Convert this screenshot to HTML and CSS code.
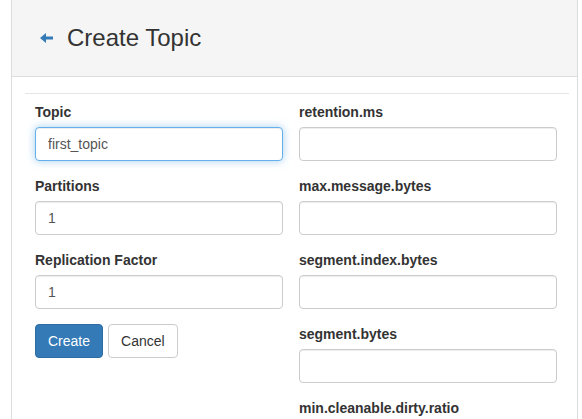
FILE: index.html
```
<!DOCTYPE html>
<html>
<head>
<meta charset="utf-8">
<link rel="stylesheet" href="styles.css">
</head>
<body>
<div class="panel">
  <div class="panel-heading">
    <svg class="back" width="13" height="10" viewBox="0 0 13 10"><path d="M0 5 L6 0 L6 3.5 L13 3.5 L13 6.5 L6 6.5 L6 10 Z" fill="#337ab7"/></svg>
    <h1 class="title">Create Topic</h1>
  </div>
  <div class="panel-body">
    <hr class="sep">
    <div class="form-grid">
      <div class="col col-left">
        <div class="form-group">
          <label class="lbl">Topic</label>
          <input class="form-control focused" type="text" value="first_topic">
        </div>
        <div class="form-group">
          <label class="lbl">Partitions</label>
          <input class="form-control" type="text" value="1">
        </div>
        <div class="form-group">
          <label class="lbl">Replication Factor</label>
          <input class="form-control" type="text" value="1">
        </div>
        <div class="actions">
          <button class="btn btn-primary">Create</button>
          <button class="btn btn-default">Cancel</button>
        </div>
      </div>
      <div class="col col-right">
        <div class="form-group">
          <label class="lbl">retention.ms</label>
          <input class="form-control" type="text">
        </div>
        <div class="form-group">
          <label class="lbl">max.message.bytes</label>
          <input class="form-control" type="text">
        </div>
        <div class="form-group">
          <label class="lbl">segment.index.bytes</label>
          <input class="form-control" type="text">
        </div>
        <div class="form-group">
          <label class="lbl">segment.bytes</label>
          <input class="form-control" type="text">
        </div>
        <div class="form-group">
          <label class="lbl">min.cleanable.dirty.ratio</label>
          <input class="form-control" type="text">
        </div>
      </div>
    </div>
  </div>
</div>
</body>
</html>
```
FILE: styles.css
```
html, body {
  margin: 0;
  padding: 0;
  background: #fff;
  font-family: "Liberation Sans", Arial, sans-serif;
  font-size: 14px;
  color: #333;
  overflow: hidden;
}
.panel {
  margin-left: 11px;
  width: 567px;
  min-height: 419px;
  border-left: 1px solid #ddd;
  border-right: 1px solid #ddd;
  box-sizing: border-box;
}
.panel-heading {
  height: 76px;
  background: #f5f5f5;
  border-bottom: 1px solid #ddd;
  display: flex;
  align-items: center;
  padding-left: 28px;
}
.back {
  display: block;
  margin-right: 14px;
}
.title {
  margin: 0;
  font-size: 24px;
  font-weight: normal;
  line-height: 26px;
  color: #333;
}
.panel-body {
  padding: 16px 0 0 0;
}
.sep {
  margin: 0 8px 8px 13px;
  border: 0;
  border-top: 1px solid #e5e5e5;
  height: 0;
}
.form-grid {
  display: grid;
  grid-template-columns: 248px 258px;
  column-gap: 16px;
  margin-left: 23px;
}
.form-group {
  margin-bottom: 15px;
}
.lbl {
  display: block;
  font-weight: bold;
  line-height: 20px;
  margin-bottom: 5px;
}
.form-control {
  display: block;
  width: 100%;
  box-sizing: border-box;
  height: 34px;
  padding: 6px 12px;
  font-family: "Liberation Sans", Arial, sans-serif;
  font-size: 14px;
  color: #555;
  background: #fff;
  border: 1px solid #ccc;
  border-radius: 4px;
  box-shadow: inset 0 1px 1px rgba(0,0,0,.075);
  margin: 0;
  outline: none;
}
.form-control.focused {
  border-color: #66afe9;
  box-shadow: inset 0 1px 1px rgba(0,0,0,.075), 0 0 8px rgba(102,175,233,.6);
}
.actions {
  display: flex;
  gap: 5px;
}
.btn {
  height: 34px;
  padding: 6px 12px;
  font-family: "Liberation Sans", Arial, sans-serif;
  font-size: 14px;
  line-height: 20px;
  border-radius: 4px;
  border: 1px solid transparent;
  margin: 0;
}
.btn-primary {
  background: #337ab7;
  border-color: #2e6da4;
  color: #fff;
}
.btn-default {
  background: #fff;
  border-color: #ccc;
  color: #333;
}
```
